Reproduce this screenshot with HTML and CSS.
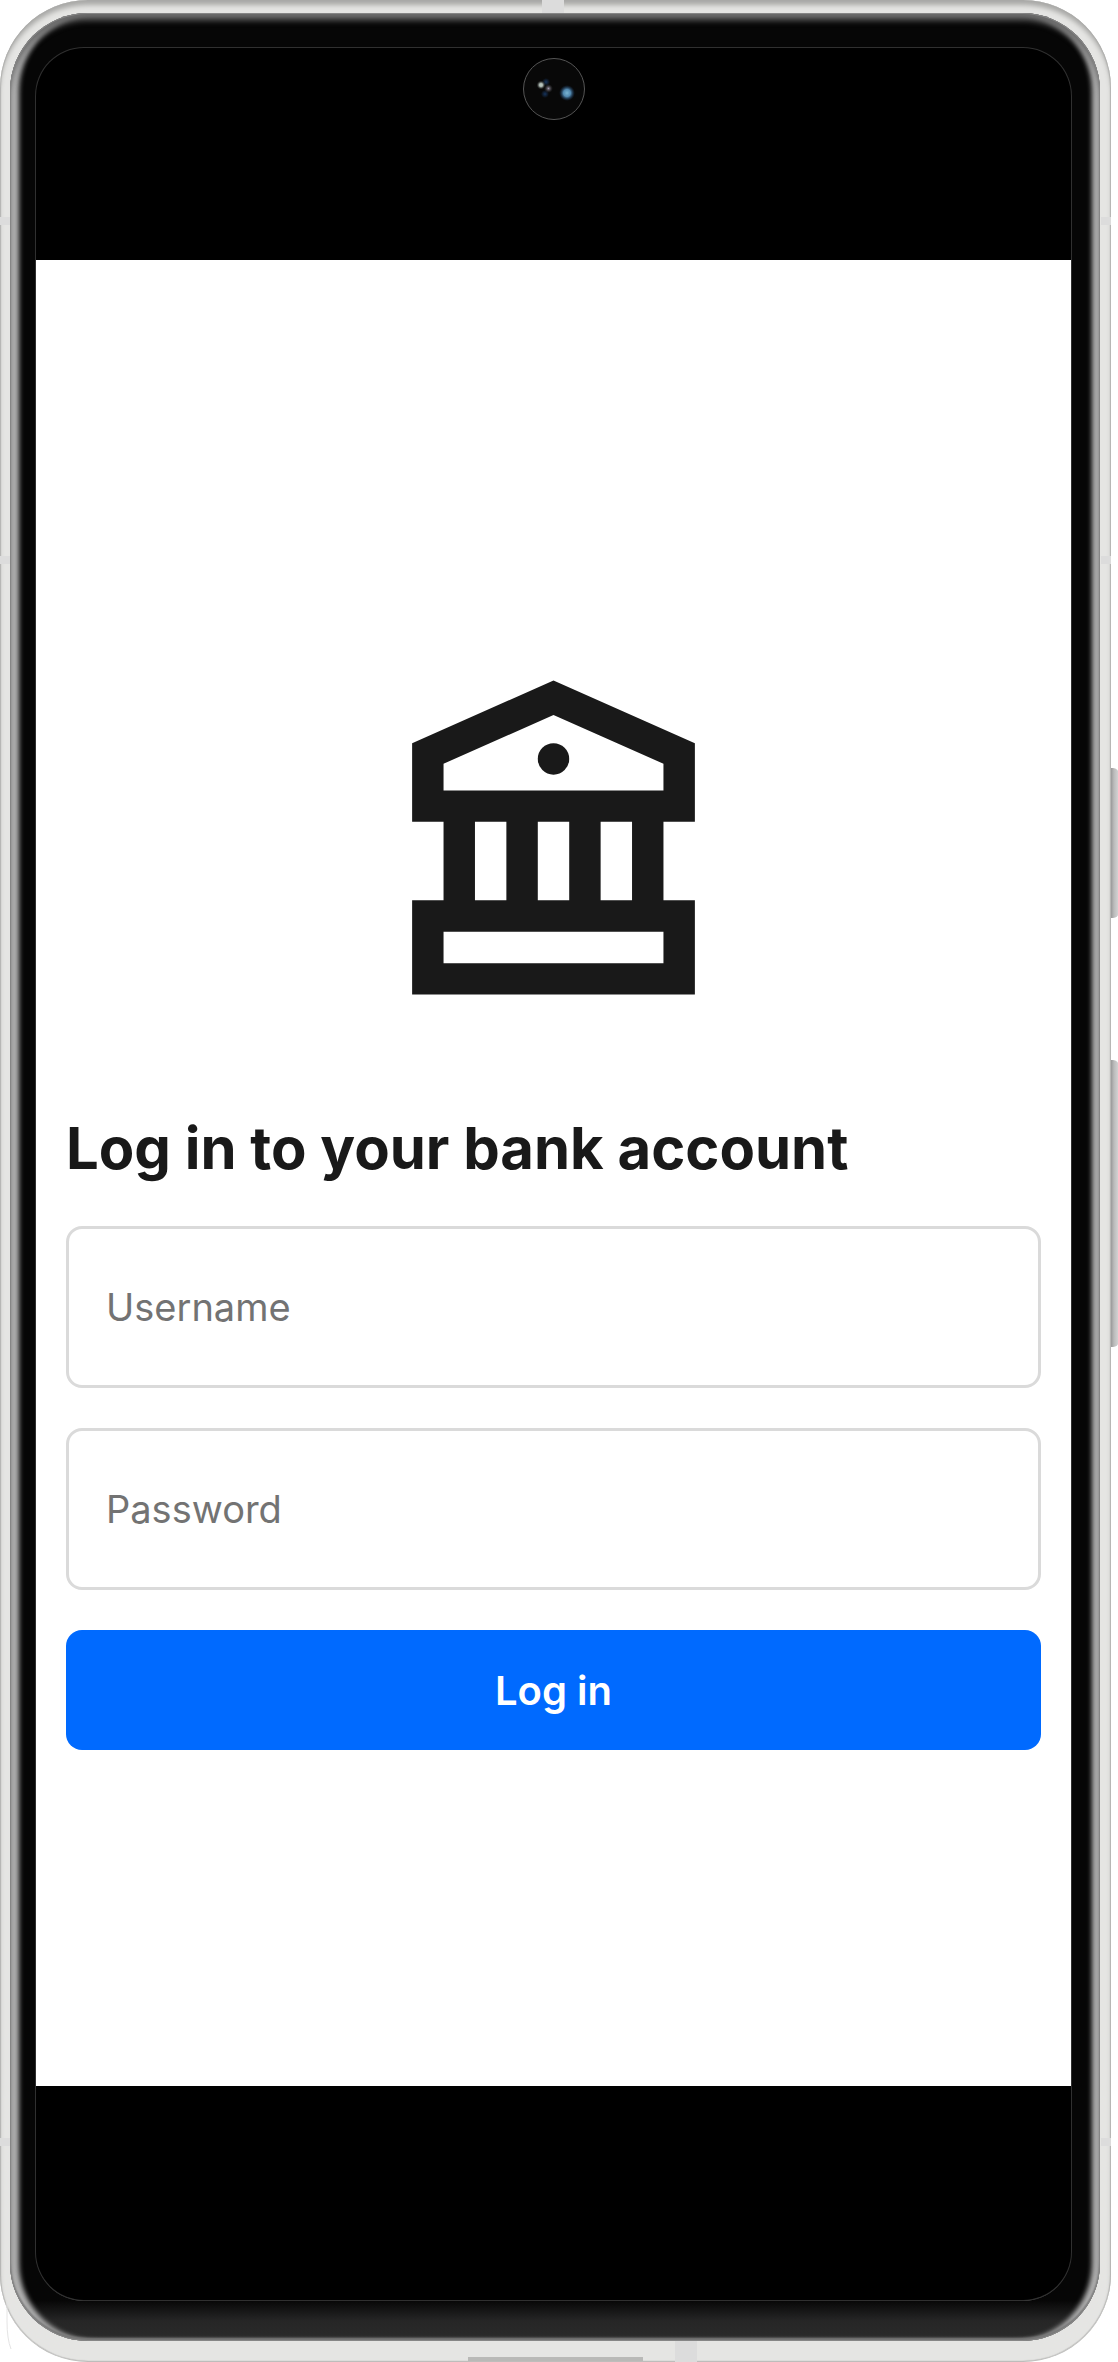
FILE: index.html
```html
<!DOCTYPE html>
<html lang="en">
<head>
  <meta charset="utf-8">
  <meta name="viewport" content="width=device-width, initial-scale=1">
  <title>Log in</title>
  <link rel="stylesheet" href="styles.css">
</head>
<body>
  <div class="phone">
    <span class="band band-left band-upper"></span>
    <span class="band band-left band-middle"></span>
    <span class="band band-left band-lower"></span>
    <span class="band band-right band-upper"></span>
    <span class="band band-right band-middle"></span>
    <span class="band band-right band-lower"></span>
    <span class="band-top"></span>
    <span class="band-bottom"></span>
    <span class="port"></span>
    <span class="key key-power"></span>
    <span class="key key-volume"></span>
    <svg class="edge-mark" viewBox="0 0 8 50" aria-hidden="true"><path d="M1 0V20Q1 38 5 48" fill="none" stroke="#e4e4e4"/></svg>
    <div class="bezel">
      <div class="screen">
        <div class="camera">
          <svg viewBox="0 0 62 62" aria-hidden="true">
            <defs>
              <radialGradient id="blue"><stop offset="0" stop-color="#79b4d2"/><stop offset=".45" stop-color="#5289b0"/><stop offset="1" stop-color="#16365e" stop-opacity="0"/></radialGradient>
              <radialGradient id="navy"><stop offset="0" stop-color="#17345c"/><stop offset="1" stop-color="#17345c" stop-opacity="0"/></radialGradient>
              <radialGradient id="pale"><stop offset="0" stop-color="#c3d0c8"/><stop offset=".4" stop-color="#a3afa9"/><stop offset="1" stop-color="#333" stop-opacity="0"/></radialGradient>
              <radialGradient id="mauve"><stop offset="0" stop-color="#a099ae"/><stop offset="1" stop-color="#333" stop-opacity="0"/></radialGradient>
            </defs>
            <circle cx="31" cy="31" r="30.5" fill="#080808" stroke="#555"/>
            <circle cx="23" cy="24" r="4" fill="url(#navy)"/>
            <circle cx="22" cy="36" r="4" fill="url(#navy)"/>
            <circle cx="18" cy="27" r="4.5" fill="url(#pale)"/>
            <circle cx="25.500" cy="30.500" r="4.500" fill="url(#mauve)"/>
            <circle cx="44" cy="35" r="8" fill="url(#blue)"/>
          </svg>
        </div>
        <main class="app">
          <svg class="bank" viewBox="0 0 24 24" role="img" aria-label="Bank">
            <path fill="#191919" fill-rule="evenodd" d="M12 2 21 6V11H19V16H21V22H3V16H5V11H3V6ZM5 7.300V9H19V7.300L12 4.200ZM7 11V16H9V11ZM11 11V16H13V11ZM15 11V16H17V11ZM5 18V20H19V18Z"/>
            <circle cx="12" cy="7" r="1" fill="#191919"/>
          </svg>
          <form class="login">
            <h1 class="title">Log in to your bank account</h1>
            <input class="field" type="text" placeholder="Username" aria-label="Username" autocomplete="username">
            <input class="field" type="password" placeholder="Password" aria-label="Password" autocomplete="current-password">
            <button class="submit" type="submit">Log in</button>
          </form>
        </main>
      </div>
    </div>
  </div>
</body>
</html>
```
FILE: styles.css
```css
* {
  box-sizing: border-box;
}

body {
  margin: 0;
  padding-right: 7px;
  background: #fff;
  color: #191919;
  font-family: Inter, "Liberation Sans", sans-serif;
  overflow-x: hidden;
}

.phone {
  position: relative;
  display: flex;
  min-height: 100vh;
  padding: 13px 11px 20px 10px;
  border-bottom: 1px solid #bdbdbb;
  border-radius: 88px;
  background: #e5e5e3;
  box-shadow: inset 0 6px 5px -1px #a8a8a6, inset 1px 0 1px #b9b9b7, inset -1px 0 1px #b9b9b7;
}

.bezel {
  display: flex;
  flex: 1;
  padding: 35px 29px 41px 26px;
  border-radius: 78px;
  background: linear-gradient(#060606, #060606 calc(100% - 41px), #262626 calc(100% - 20px), #2b2b2b);
  box-shadow:
    inset 0 0 0 1px #868686,
    inset 0 -3px 2px #777,
    inset 0 7px 6px #6a6a6a,
    inset 9px 0 5px #b4b4b4,
    inset -8px 0 5px #b4b4b4;
}

.screen {
  position: relative;
  display: flex;
  flex: 1;
  flex-direction: column;
  padding: 212px 0 214px;
  border-radius: 48px;
  background: #000;
  box-shadow: 0 0 0 1px #303030, 0 1px 0 #606060;
}

.camera {
  position: absolute;
  top: 10px;
  left: 50%;
  width: 62px;
  height: 62px;
  transform: translateX(-50%);
}

.camera svg {
  display: block;
}

.app {
  display: flex;
  flex: 1;
  flex-direction: column;
  align-items: center;
  justify-content: center;
  gap: 84px;
  padding: 53px 30px 0;
  background: #fff;
}

.bank {
  width: 377px;
  height: 377px;
}

.login {
  display: flex;
  flex-direction: column;
  gap: 40px;
  width: 100%;
}

.title {
  margin: 0;
  font-size: 58px;
  font-weight: 700;
  line-height: 76px;
}

.field,
.submit {
  width: 100%;
  border-radius: 16px;
  font: inherit;
}

.field {
  height: 162px;
  padding: 0 37px;
  border: 3px solid #dadada;
  background: #fff;
  font-size: 38px;
}

.field::placeholder {
  color: #737373;
  opacity: 1;
}

.submit {
  height: 120px;
  border: 0;
  background: #006aff;
  color: #fff;
  font-size: 40px;
  font-weight: 600;
}

/* Antenna bands, port and side keys on the metal frame */
.band {
  position: absolute;
  width: 10px;
  height: 8px;
  background: #dcdcdc;
}

.band-left {
  left: 0;
}

.band-right {
  right: 0;
}

.band-upper {
  top: 217px;
}

.band-middle {
  top: 556px;
}

.band-lower {
  bottom: 215px;
}

.band-top,
.band-bottom {
  position: absolute;
  width: 22px;
  background: #dcdcdc;
}

.band-top {
  top: 0;
  left: 542px;
  height: 13px;
}

.band-bottom {
  bottom: -1px;
  left: 675px;
  height: 21px;
}

.port {
  position: absolute;
  bottom: 0;
  left: 468px;
  width: 175px;
  height: 4px;
  background: #b9b9b7;
}

.key {
  position: absolute;
  left: 100%;
  width: 8px;
  border-radius: 0 6px 6px 0;
  background: linear-gradient(90deg, #999, #bbb 3px, #d8d8d8);
}

.key-power {
  top: 768px;
  height: 150px;
}

.key-volume {
  top: 1060px;
  height: 287px;
}

.edge-mark {
  position: absolute;
  bottom: 10px;
  left: 6px;
  width: 8px;
  height: 50px;
}
```
